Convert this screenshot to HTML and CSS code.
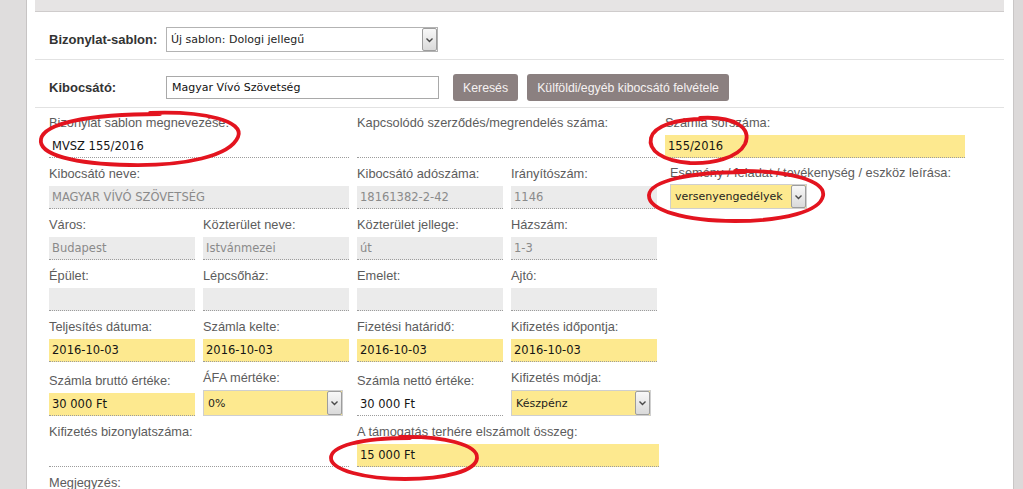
FILE: index.html
```html
<!DOCTYPE html>
<html lang="hu">
<head>
<meta charset="utf-8">
<title>Bizonylat</title>
<link rel="stylesheet" href="styles.css">
</head>
<body>
<div class="page">
  <aside class="side-left"></aside>
  <main class="panel">
    <div class="topbar"></div>

    <div class="hrow row-sablon">
      <span class="hlabel">Bizonylat-sablon:</span>
      <div class="select wide">
        <span class="sel-text">Új sablon: Dologi jellegű</span>
        <span class="sel-btn"><svg width="9" height="6" viewBox="0 0 9 6"><path d="M1.5 1.5 L4.5 4.5 L7.5 1.5" fill="none" stroke="#4a4a4a" stroke-width="1.4"/></svg></span>
      </div>
    </div>

    <div class="hrow row-kib">
      <span class="hlabel">Kibocsátó:</span>
      <div class="text-input">Magyar Vívó Szövetség</div>
      <button class="btn btn-search">Keresés</button>
      <button class="btn btn-foreign">Külföldi/egyéb kibocsátó felvétele</button>
    </div>

    <div class="form-grid">
      <!-- row A -->
      <div class="fld span2 rs"><div class="lbl">Bizonylat sablon megnevezése:</div><div class="inp">MVSZ 155/2016</div></div>
      <div class="fld span2"><div class="lbl">Kapcsolódó szerződés/megrendelés száma:</div><div class="inp"></div></div>
      <div class="fld span2"><div class="lbl">Számla sorszáma:</div><div class="inp yellow">155/2016</div></div>

      <!-- row B -->
      <div class="fld span2 rs"><div class="lbl">Kibocsátó neve:</div><div class="inp gray">MAGYAR VÍVÓ SZÖVETSÉG</div></div>
      <div class="fld"><div class="lbl">Kibocsátó adószáma:</div><div class="inp gray">18161382-2-42</div></div>
      <div class="fld"><div class="lbl">Irányítószám:</div><div class="inp gray">1146</div></div>
      <div class="fld sel-field span2 shifted"><div class="lbl">Esemény / feladat / tevékenység / eszköz leírása:</div>
        <div class="fsel w137"><span class="sel-text">versenyengedélyek</span><span class="sel-btn"><svg width="9" height="6" viewBox="0 0 9 6"><path d="M1.5 1.5 L4.5 4.5 L7.5 1.5" fill="none" stroke="#4a4a4a" stroke-width="1.4"/></svg></span></div>
      </div>

      <!-- row C -->
      <div class="fld rs"><div class="lbl">Város:</div><div class="inp gray">Budapest</div></div>
      <div class="fld"><div class="lbl">Közterület neve:</div><div class="inp gray">Istvánmezei</div></div>
      <div class="fld"><div class="lbl">Közterület jellege:</div><div class="inp gray">út</div></div>
      <div class="fld"><div class="lbl">Házszám:</div><div class="inp gray">1-3</div></div>

      <!-- row D -->
      <div class="fld rs"><div class="lbl">Épület:</div><div class="inp gray"></div></div>
      <div class="fld"><div class="lbl">Lépcsőház:</div><div class="inp gray"></div></div>
      <div class="fld"><div class="lbl">Emelet:</div><div class="inp gray"></div></div>
      <div class="fld"><div class="lbl">Ajtó:</div><div class="inp gray"></div></div>

      <!-- row E -->
      <div class="fld rs"><div class="lbl">Teljesítés dátuma:</div><div class="inp yellow">2016-10-03</div></div>
      <div class="fld"><div class="lbl">Számla kelte:</div><div class="inp yellow">2016-10-03</div></div>
      <div class="fld"><div class="lbl">Fizetési határidő:</div><div class="inp yellow">2016-10-03</div></div>
      <div class="fld"><div class="lbl">Kifizetés időpontja:</div><div class="inp yellow">2016-10-03</div></div>

      <!-- row F -->
      <div class="fld rs"><div class="lbl">Számla bruttó értéke:</div><div class="inp yellow">30 000 Ft</div></div>
      <div class="fld sel-field big"><div class="lbl">ÁFA mértéke:</div>
        <div class="fsel w140"><span class="sel-text">0%</span><span class="sel-btn"><svg width="9" height="6" viewBox="0 0 9 6"><path d="M1.5 1.5 L4.5 4.5 L7.5 1.5" fill="none" stroke="#4a4a4a" stroke-width="1.4"/></svg></span></div>
      </div>
      <div class="fld"><div class="lbl">Számla nettó értéke:</div><div class="inp">30 000 Ft</div></div>
      <div class="fld sel-field big"><div class="lbl">Kifizetés módja:</div>
        <div class="fsel w140"><span class="sel-text">Készpénz</span><span class="sel-btn"><svg width="9" height="6" viewBox="0 0 9 6"><path d="M1.5 1.5 L4.5 4.5 L7.5 1.5" fill="none" stroke="#4a4a4a" stroke-width="1.4"/></svg></span></div>
      </div>

      <!-- row G -->
      <div class="fld span2 rs"><div class="lbl">Kifizetés bizonylatszáma:</div><div class="inp"></div></div>
      <div class="fld span2"><div class="lbl">A támogatás terhére elszámolt összeg:</div><div class="inp yellow wide2">15 000 Ft</div></div>

      <!-- row H -->
      <div class="fld span4 rs"><div class="lbl">Megjegyzés:</div><div class="inp"></div></div>
    </div>
  </main>
  <aside class="side-right"></aside>
</div>

<svg class="annotations" width="1023" height="489" viewBox="0 0 1023 489">
  <g fill="none" stroke="#e3141f" stroke-width="3.8" stroke-linecap="round">
    <path d="M150 113 C 205 111, 245 121, 238 137 C 230 156, 185 166, 130 165 C 75 164, 38 155, 41 139 C 44 124, 85 114, 160 114"/>
    <path d="M700 118 C 735 116, 752 128, 745 144 C 738 158, 712 164, 690 163 C 662 161, 648 150, 651 138 C 654 126, 675 119, 705 119"/>
    <path d="M735 171 C 790 170, 826 181, 823 196 C 820 211, 785 221, 735 221 C 685 221, 648 210, 649 195 C 650 181, 690 172, 745 172"/>
    <path d="M400 437 C 445 436, 478 445, 477 458 C 476 471, 445 479, 405 479 C 365 479, 331 470, 331 458 C 331 446, 360 438, 410 438"/>
  </g>
</svg>
</body>
</html>
```

FILE: styles.css
```css
html, body {
  margin: 0;
  padding: 0;
  height: 100%;
  overflow: hidden;
}

body {
  position: relative;
  background: #ffffff;
  font-family: "Liberation Sans", Arial, sans-serif;
}

.page {
  display: flex;
  min-height: 489px;
}

.side-left {
  width: 26px;
  background: #dfdddd;
  border-right: 1px solid #c7c4c4;
  flex: none;
}

.side-right {
  width: 9px;
  background: #dcd9d9;
  border-left: 1px solid #c9c6c6;
  flex: none;
}

.panel {
  flex: 1;
  background: #ffffff;
  padding: 0 8px;
}

.topbar {
  height: 11px;
  background: #e6e4e4;
  border-bottom: 1px solid #cfcccc;
  margin-right: 1px;
}

.hrow {
  display: flex;
  align-items: center;
  padding-left: 14px;
  border-bottom: 1px solid #e2e2e2;
  margin-right: 1px;
}

.row-sablon {
  padding-top: 15px;
  padding-bottom: 7px;
}

.row-kib {
  padding-top: 14px;
  padding-bottom: 6px;
}

.hlabel {
  width: 117px;
  flex: none;
  font-weight: bold;
  font-size: 13px;
  color: #333333;
}

.select {
  display: flex;
  height: 25px;
  box-sizing: border-box;
  border: 1px solid #b3b3b3;
  background: #ffffff;
}

.select.wide {
  width: 272px;
}

.sel-text {
  flex: 1;
  font-family: "DejaVu Sans", Verdana, sans-serif;
  font-size: 11px;
  color: #1e1e1e;
  padding-left: 4px;
  display: flex;
  align-items: center;
  white-space: nowrap;
  overflow: hidden;
}

.sel-btn {
  width: 15px;
  flex: none;
  box-sizing: border-box;
  border: 1px solid #9d9d9d;
  border-radius: 2px;
  background: linear-gradient(#f8f8f8, #dadada);
  display: flex;
  align-items: center;
  justify-content: center;
}

.text-input {
  width: 273px;
  height: 23px;
  box-sizing: border-box;
  border: 1px solid #a9a9a9;
  padding-left: 5px;
  font-family: "DejaVu Sans", Verdana, sans-serif;
  font-size: 11px;
  line-height: 21px;
  color: #111111;
}

.btn {
  height: 27px;
  border: none;
  border-radius: 3px;
  background: #8b8080;
  color: #f6f2f2;
  font-family: "Liberation Sans", Arial, sans-serif;
  font-size: 12.3px;
  padding: 0 10px;
  cursor: pointer;
}

.btn-search {
  margin-left: 14px;
}

.btn-foreign {
  margin-left: 9px;
}

.form-grid {
  display: grid;
  grid-template-columns: repeat(6, 146px);
  column-gap: 8px;
  row-gap: 4px;
  align-items: end;
  padding: 3px 0 0 14px;
}

.fld {
  min-width: 0;
}

.rs {
  grid-column-start: 1;
}

.span2 {
  grid-column-end: span 2;
}

.span4 {
  grid-column-end: span 4;
}

.shifted {
  margin-left: 5px;
}

.lbl {
  font-size: 12.8px;
  line-height: 24px;
  color: #5c5c5c;
  white-space: nowrap;
}

.inp {
  height: 22px;
  border-bottom: 1px dotted #9c9c9c;
  padding: 0 3px;
  font-family: "DejaVu Sans", Verdana, sans-serif;
  font-size: 11.5px;
  line-height: 22px;
  color: #151515;
  white-space: nowrap;
  overflow: hidden;
}

.inp.gray {
  background: #ebebeb;
  color: #8a8a8a;
}

.inp.yellow {
  background: #fde98f;
}

.inp.wide2 {
  margin-right: -2px;
}

.sel-field .lbl {
  line-height: 22px;
}

.sel-field.big .lbl {
  line-height: 24px;
}

.fsel {
  display: flex;
  height: 25px;
  box-sizing: border-box;
  border: 1px solid #cfcfcf;
  background: #fde98f;
}

.sel-field.big .fsel {
  height: 26px;
}

.fsel.w137 {
  width: 137px;
}

.fsel.w140 {
  width: 140px;
}

.annotations {
  position: absolute;
  left: 0;
  top: 0;
  pointer-events: none;
}
```
